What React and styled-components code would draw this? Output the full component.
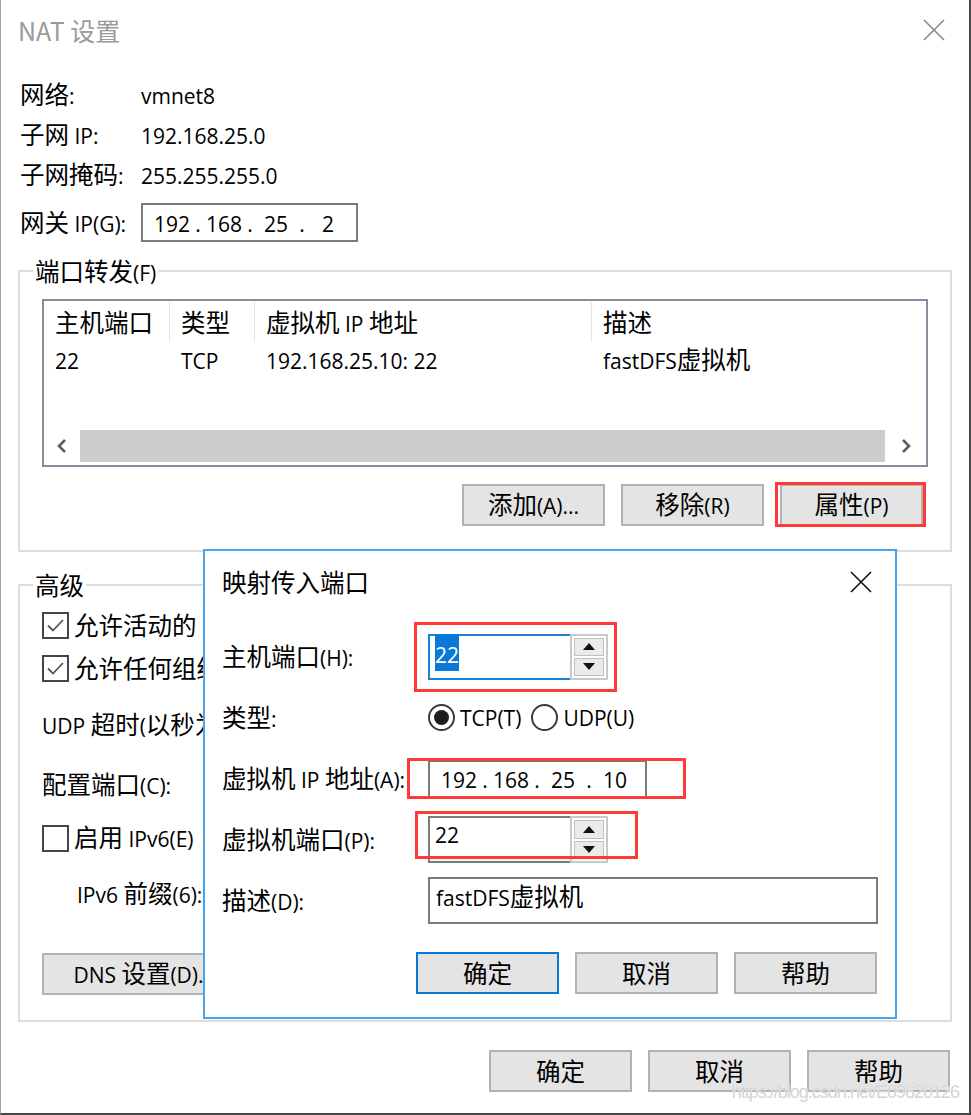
import React from 'react';
import styled, { createGlobalStyle } from 'styled-components';

const GlobalStyle = createGlobalStyle`
  html, body {
    margin: 0;
    padding: 0;
    background: #fff;
  }
  body {
    font-family: "Noto Sans CJK SC", "Noto Sans", sans-serif;
    font-size: 24.5px;
    line-height: 30px;
    color: #000;
  }
  * {
    box-sizing: border-box;
  }
`;

// latin runs render a bit smaller than the CJK glyphs, like Segoe UI next to YaHei
const Lat = styled.span`
  font-family: "Open Sans", "Noto Sans", sans-serif;
  font-size: 21px;
`;

const T = ({ children }) => (
  <span>
    {String(children)
      .split(/([\x20-\x7e]+)/)
      .filter((s) => s !== '')
      .map((s, i) =>
        /[\x20-\x7e]/.test(s[0]) ? <Lat key={i}>{s}</Lat> : <React.Fragment key={i}>{s}</React.Fragment>
      )}
  </span>
);

const Window = styled.div`
  position: relative;
  width: 971px;
  height: 1115px;
  overflow: hidden;
  background: #fff;
  border-left: 1px solid #a0a0a0;
  border-right: 2px solid #474747;
  border-bottom: 2px solid #474747;
  display: flex;
  flex-direction: column;
`;

const TitleBar = styled.div`
  height: ${(p) => p.$h}px;
  flex-shrink: 0;
  display: flex;
  align-items: center;
  justify-content: space-between;
  padding: 0 ${(p) => p.$pr}px 0 17px;
`;

const Title = styled.div`
  font-size: ${(p) => p.$size}px;
  color: ${(p) => p.$color};
`;

const InfoList = styled.div`
  margin-top: 15px;
  padding-left: 19px;
  display: flex;
  flex-direction: column;
`;

const InfoRow = styled.div`
  height: 40px;
  display: flex;
  align-items: center;
`;

const GatewayRow = styled(InfoRow)`
  height: 39px;
  margin-top: 8px;
`;

const InfoLabel = styled.div`
  width: 121px;
  flex-shrink: 0;
  white-space: nowrap;
`;

const IpBox = styled.div`
  width: ${(p) => p.$w}px;
  height: ${(p) => p.$h}px;
  border: 2px solid #7a7a7a;
  display: flex;
  align-items: center;
  padding-left: 6px;
`;

const IpField = styled.span`
  width: 46px;
  text-align: center;
`;

const IpDot = styled.span`
  width: 6px;
  text-align: center;
`;

const Group = styled.div`
  margin: ${(p) => p.$mt}px 17px 0 17px;
  border: 2px solid #dedede;
  display: flex;
  flex-direction: column;
`;

const Legend = styled.div`
  margin: -16px 0 0 13px;
  padding: 0 2px;
  width: fit-content;
  background: #fff;
  line-height: 30px;
`;

const ListBox = styled.div`
  margin: 11px 22px 0;
  height: 168px;
  border: 2px solid #8a8c9e;
  display: flex;
  flex-direction: column;
`;

const ListGrid = styled.div`
  display: grid;
  grid-template-columns: 126px 85px 337px 1fr;
  height: ${(p) => p.$h}px;
  align-items: center;
`;

const HeadCell = styled.div`
  height: 40px;
  line-height: 40px;
  padding-left: 11px;
  white-space: nowrap;
  border-right: ${(p) => (p.$last ? 'none' : '1px solid #e6e6e6')};
`;

const Cell = styled.div`
  padding-left: 11px;
  white-space: nowrap;
`;

const HScroll = styled.div`
  margin-top: auto;
  margin-bottom: 3px;
  height: 32px;
  display: flex;
`;

const ScrollArrow = styled.div`
  width: ${(p) => p.$w}px;
  display: flex;
  align-items: center;
  justify-content: center;
`;

const ScrollThumb = styled.div`
  flex: 1;
  background: #cdcdcd;
`;

const ButtonRow = styled.div`
  display: flex;
  justify-content: flex-end;
  gap: 16px;
  margin-top: ${(p) => p.$mt}px;
  padding-right: ${(p) => p.$pr}px;
  padding-bottom: ${(p) => p.$pb}px;
`;

const Button = styled.div`
  width: ${(p) => p.$w || 143}px;
  height: 42px;
  flex-shrink: 0;
  border: 2px solid ${(p) => (p.$primary ? '#0a78d6' : '#b2b2b2')};
  background: #e4e4e4;
  display: flex;
  align-items: center;
  justify-content: center;
  white-space: nowrap;
`;

const Marked = styled.div`
  position: relative;
  display: inline-flex;
`;

const Mark = styled.div`
  position: absolute;
  inset: ${(p) => p.$inset};
  border: 3px solid #ff3838;
  pointer-events: none;
`;

const AdvGrid = styled.div`
  display: grid;
  grid-template-rows: 51px 35px 78px 42px 64px 48px 77px;
  padding: 0 0 25px 22px;
`;

const AdvRow = styled.div`
  display: flex;
  align-items: ${(p) => (p.$end ? 'flex-end' : 'center')};
  padding-left: ${(p) => p.$indent || 0}px;
  white-space: nowrap;
`;

const CheckBox = styled.span`
  width: 27px;
  height: 27px;
  flex-shrink: 0;
  border: 2px solid #454545;
  display: inline-flex;
  align-items: center;
  justify-content: center;
  margin-right: 5px;
`;

const BottomBar = styled.div`
  margin-top: 28px;
  display: flex;
  justify-content: flex-end;
  gap: 16px;
  padding-right: 19px;
`;

const Dialog = styled.div`
  position: absolute;
  left: 202px;
  top: 549px;
  width: 694px;
  height: 470px;
  background: #fff;
  border: 2px solid #4ba3ea;
  display: flex;
  flex-direction: column;
`;

const FormGrid = styled.div`
  display: grid;
  grid-template-columns: 206px 1fr;
  grid-auto-rows: 61px;
  align-items: center;
  padding: 13px 0 0 17px;
`;

const FormLabel = styled.div`
  white-space: nowrap;
`;

const FieldCell = styled.div`
  display: flex;
  align-items: center;
`;

const Spinner = styled.div`
  width: 180px;
  height: ${(p) => p.$h}px;
  display: flex;
`;

const SpinText = styled.div`
  flex: 1;
  border: 2px solid ${(p) => (p.$focus ? '#1b82d9' : '#7a7a7a')};
  border-right: none;
  padding: ${(p) => p.$pt}px 5px 0;
  line-height: 28px;
`;

const Selected = styled.span`
  background: #0a78d7;
  color: #fff;
  padding: 1px 0;
`;

const SpinButtons = styled.div`
  width: 38px;
  border: 2px solid #c9c9c9;
  padding: 2px;
  display: flex;
  flex-direction: column;
  gap: 2px;
`;

const SpinBtn = styled.div`
  flex: 1;
  background: #ebebeb;
  border: 1px solid #c0c0c0;
  display: flex;
  align-items: center;
  justify-content: center;
`;

const RadioItem = styled.label`
  display: inline-flex;
  align-items: center;
  gap: 5px;
  margin-right: 10px;
`;

const Radio = styled.span`
  width: 27px;
  height: 27px;
  border-radius: 50%;
  border: 2px solid #3a3a3a;
  display: inline-flex;
  align-items: center;
  justify-content: center;
  &::after {
    content: '';
    width: 15px;
    height: 15px;
    border-radius: 50%;
    background: #1e1e1e;
    display: ${(p) => (p.$on ? 'block' : 'none')};
  }
`;

const DescBox = styled.div`
  width: 450px;
  height: 47px;
  border: 2px solid #7a7a7a;
  padding: 2px 6px;
  line-height: 30px;
`;

const Watermark = styled.div`
  position: absolute;
  right: 10px;
  bottom: 6px;
  font-family: "Liberation Sans", Arial, sans-serif;
  font-size: 18px;
  letter-spacing: -1px;
  color: #d4d4d4;
  text-shadow: 0 0 1px #fff;
`;

const CloseIcon = ({ color }) => (
  <svg width="22" height="22" viewBox="0 0 22 22">
    <path d="M1 1 L21 21 M21 1 L1 21" stroke={color} strokeWidth="1.6" fill="none" />
  </svg>
);

const CheckMark = () => (
  <svg width="21" height="21" viewBox="0 0 21 21">
    <polyline points="3,10.5 8,15.5 18,5" stroke="#555" strokeWidth="1.8" fill="none" />
  </svg>
);

const Chevron = ({ dir }) => (
  <svg width="12" height="16" viewBox="0 0 12 16">
    <polyline
      points={dir === 'left' ? '9,2 3,8 9,14' : '3,2 9,8 3,14'}
      stroke="#5f5f5f"
      strokeWidth="2.6"
      fill="none"
    />
  </svg>
);

const Tri = ({ up }) => (
  <svg width="12" height="7" viewBox="0 0 12 7">
    <polygon points={up ? '0,7 6,0 12,7' : '0,0 12,0 6,7'} fill="#111" />
  </svg>
);

const IpControl = ({ parts, w, h }) => (
  <IpBox $w={w} $h={h}>
    {parts.map((part, i) => (
      <React.Fragment key={i}>
        {i > 0 && <IpDot><Lat>.</Lat></IpDot>}
        <IpField><Lat>{part}</Lat></IpField>
      </React.Fragment>
    ))}
  </IpBox>
);

const SpinBox = ({ children, focus, h, pt }) => (
  <Spinner $h={h}>
    <SpinText $focus={focus} $pt={pt}>{children}</SpinText>
    <SpinButtons>
      <SpinBtn><Tri up /></SpinBtn>
      <SpinBtn><Tri /></SpinBtn>
    </SpinButtons>
  </Spinner>
);

export default function App() {
  return (
    <>
      <GlobalStyle />
      <Window>
        <TitleBar $h={60} $pr={24}>
          <Title $size={25} $color="#9a9a9a">NAT 设置</Title>
          <CloseIcon color="#8a8a8a" />
        </TitleBar>

        <InfoList>
          <InfoRow>
            <InfoLabel><T>网络:</T></InfoLabel>
            <T>vmnet8</T>
          </InfoRow>
          <InfoRow>
            <InfoLabel><T>子网 IP:</T></InfoLabel>
            <T>192.168.25.0</T>
          </InfoRow>
          <InfoRow>
            <InfoLabel><T>子网掩码:</T></InfoLabel>
            <T>255.255.255.0</T>
          </InfoRow>
          <GatewayRow>
            <InfoLabel><T>网关 IP(G):</T></InfoLabel>
            <IpControl parts={['192', '168', '25', '2']} w={217} h={39} />
          </GatewayRow>
        </InfoList>

        <Group $mt={28}>
          <Legend><T>端口转发(F)</T></Legend>
          <ListBox>
            <ListGrid $h={42}>
              <HeadCell>主机端口</HeadCell>
              <HeadCell>类型</HeadCell>
              <HeadCell><T>虚拟机 IP 地址</T></HeadCell>
              <HeadCell $last>描述</HeadCell>
            </ListGrid>
            <ListGrid $h={34}>
              <Cell><T>22</T></Cell>
              <Cell><T>TCP</T></Cell>
              <Cell><T>192.168.25.10: 22</T></Cell>
              <Cell><T>fastDFS虚拟机</T></Cell>
            </ListGrid>
            <HScroll>
              <ScrollArrow $w={36}><Chevron dir="left" /></ScrollArrow>
              <ScrollThumb />
              <ScrollArrow $w={41}><Chevron dir="right" /></ScrollArrow>
            </HScroll>
          </ListBox>
          <ButtonRow $mt={17} $pr={27} $pb={24}>
            <Button><T>添加(A)...</T></Button>
            <Button><T>移除(R)</T></Button>
            <Marked>
              <Button><T>属性(P)</T></Button>
              <Mark $inset="-2px -3px -1px -5px" />
            </Marked>
          </ButtonRow>
        </Group>

        <Group $mt={32}>
          <Legend>高级</Legend>
          <AdvGrid>
            <AdvRow>
              <CheckBox><CheckMark /></CheckBox>
              <T>允许活动的 FTP(T)</T>
            </AdvRow>
            <AdvRow>
              <CheckBox><CheckMark /></CheckBox>
              <T>允许任何组织唯一标识符(O)</T>
            </AdvRow>
            <AdvRow><T>UDP 超时(以秒为单位)(U):</T></AdvRow>
            <AdvRow><T>配置端口(C):</T></AdvRow>
            <AdvRow>
              <CheckBox />
              <T>启用 IPv6(E)</T>
            </AdvRow>
            <AdvRow $indent={35}><T>IPv6 前缀(6):</T></AdvRow>
            <AdvRow $end>
              <Button $w={204}><T>DNS 设置(D)...</T></Button>
            </AdvRow>
          </AdvGrid>
        </Group>

        <BottomBar>
          <Button>确定</Button>
          <Button>取消</Button>
          <Button>帮助</Button>
        </BottomBar>

        <Dialog>
          <TitleBar $h={62} $pr={23}>
            <Title $size={24.5} $color="#000">映射传入端口</Title>
            <CloseIcon color="#111" />
          </TitleBar>
          <FormGrid>
            <FormLabel><T>主机端口(H):</T></FormLabel>
            <FieldCell>
              <Marked>
                <SpinBox focus h={46} pt={3}>
                  <Selected><Lat>22</Lat></Selected>
                </SpinBox>
                <Mark $inset="-12px -9px -12px -14px" />
              </Marked>
            </FieldCell>

            <FormLabel><T>类型:</T></FormLabel>
            <FieldCell>
              <RadioItem><Radio $on /><Lat>TCP(T)</Lat></RadioItem>
              <RadioItem><Radio /><Lat>UDP(U)</Lat></RadioItem>
            </FieldCell>

            <FormLabel><T>虚拟机 IP 地址(A):</T></FormLabel>
            <FieldCell>
              <Marked>
                <IpControl parts={['192', '168', '25', '10']} w={219} h={38} />
                <Mark $inset="-2px -39px -1px -21px" />
              </Marked>
            </FieldCell>

            <FormLabel><T>虚拟机端口(P):</T></FormLabel>
            <FieldCell>
              <Marked>
                <SpinBox h={47} pt={1}><Lat>22</Lat></SpinBox>
                <Mark $inset="-5px -30px 4px -13px" />
              </Marked>
            </FieldCell>

            <FormLabel><T>描述(D):</T></FormLabel>
            <FieldCell>
              <DescBox><T>fastDFS虚拟机</T></DescBox>
            </FieldCell>
          </FormGrid>
          <ButtonRow $mt={21} $pr={18} $pb={0}>
            <Button $primary>确定</Button>
            <Button>取消</Button>
            <Button>帮助</Button>
          </ButtonRow>
        </Dialog>

        <Watermark>https://blog.csdn.net/E09620126</Watermark>
      </Window>
    </>
  );
}
